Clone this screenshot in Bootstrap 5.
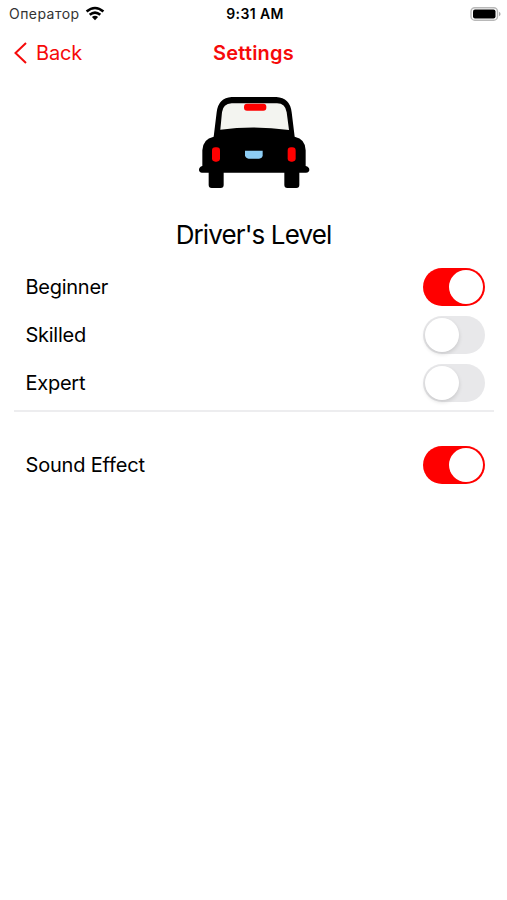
<!DOCTYPE html>
<html lang="en">
<head>
<meta charset="utf-8">
<meta name="viewport" content="width=device-width, initial-scale=1">
<title>Settings</title>
<link href="https://cdn.jsdelivr.net/npm/bootstrap@5.3.0/dist/css/bootstrap.min.css" rel="stylesheet">
<style>
body { font-family: Inter, "Liberation Sans", sans-serif; color: #000; background: #fff; }
svg { display: block; }
.status-bar { height: 28px; padding: 0 6px 0 9px; font-size: 14px; line-height: 28px; }
.status-side { flex: 1 1 0; }
.carrier { color: #333; letter-spacing: .45px; }
.wifi { margin-left: 5px; margin-top: -2px; }
.clock { font-weight: 600; font-size: 14px; letter-spacing: .4px; }
.title-bar { height: 50px; padding: 0 13px; color: #f60a0a; font-size: 20px; line-height: 50px; }
.back-link { color: inherit; letter-spacing: -.2px; line-height: 24px; }
.screen-title { font-size: 20px; font-weight: 600; letter-spacing: .2px; }
.taxi { margin-top: 7px; }
.level-title { font-size: 26px; line-height: 32px; letter-spacing: -.88px; margin: 24px 0 12.4px; font-weight: 400; }
.option-list { margin: 0 13px 0 14px; border-bottom: 2px solid #ededef; padding-bottom: 3.5px; }
.option-row { height: 47.7px; padding: 0 9px 0 11.5px; font-size: 20px; }
.option-list .option-row label { letter-spacing: -.26px; }
.sound-list { margin: 29.2px 13px 0 14px; }
.sound-list .option-row label { letter-spacing: -.18px; }
.form-switch .form-check-input.toggle {
  width: 62.5px; height: 38px; margin: 0; border: 0; border-radius: 19px;
  background-color: #e8e8ea; background-image: none; position: relative; box-shadow: none;
}
.form-switch .form-check-input.toggle::before {
  content: ""; position: absolute; left: 2px; top: 2px; width: 34px; height: 34px;
  border-radius: 50%; background: #fff; box-shadow: 0 2px 4px rgba(0,0,0,.14);
}
.form-switch .form-check-input.toggle:checked { background-color: #f00; background-image: none; }
.form-switch .form-check-input.toggle:checked::before { left: 26.5px; box-shadow: none; }
</style>
</head>
<body>
<header>
  <div class="status-bar d-flex align-items-center">
    <div class="status-side d-flex align-items-center">
      <span class="carrier">Оператор</span>
      <svg class="wifi" width="20" height="15" viewBox="0 0 20 15" fill="none" stroke="#000" stroke-width="2.6">
        <path d="M1.6 5.6Q10-1.6 18.4 5.6M4.7 8.8Q10 4.3 15.3 8.8"/>
        <path d="M6.9 11.1Q10 8.6 13.1 11.1L10 14.2Z" fill="#000" stroke="none"/>
      </svg>
    </div>
    <span class="clock">9:31 AM</span>
    <div class="status-side d-flex justify-content-end">
      <svg width="31" height="15" viewBox="0 0 31 15">
        <rect x="1" y=".7" width="26.5" height="12.5" rx="3.8" fill="#fff" stroke="#b8b8b8" stroke-width="1.4"/>
        <rect x="3" y="2.5" width="22.5" height="9" rx="2" fill="#000"/>
        <path d="M29 4.7v4.6q1.6-.8 1.6-2.3T29 4.7" fill="#aaa"/>
      </svg>
    </div>
  </div>
  <nav class="title-bar d-flex align-items-center">
    <div class="status-side d-flex">
      <a class="back-link d-flex align-items-center text-decoration-none" href="#">
        <svg class="me-2" width="15" height="24" viewBox="0 0 15 24" fill="none" stroke="currentColor" stroke-width="2"><path d="M13 2L2.5 12L13 22"/></svg>
        <span>Back</span>
      </a>
    </div>
    <span class="screen-title">Settings</span>
    <div class="status-side"></div>
  </nav>
</header>
<main>
  <svg class="taxi mx-auto" width="130" height="110" viewBox="-3 0 390 330">
    <path d="M111 55H272Q287 60 290 80L297 137Q190 120 91 137L96 82Q98 60 111 55Z" fill="#f3f4f0"/>
    <path d="M71 155L80 82Q85 38 125 36H259Q300 38 305 82L314 155Q347 162 347 196V243Q358 246 358 254T348 263H328V300Q328 309 319 309H292Q283 309 283 300V263H101V300Q101 309 92 309H65Q56 309 56 300V263H36Q27 262 27 254T37 243V196Q38 162 71 155ZM91 134Q192 120 297 135L290 82Q286 55 261 55H125Q99 56 96 82Z" fill="#000" fill-rule="evenodd"/>
    <rect x="162" y="56" width="67" height="21" rx="9" fill="#f00"/>
    <rect x="66" y="187" width="24" height="43" rx="10" fill="#f00"/>
    <rect x="293" y="187" width="24" height="43" rx="10" fill="#f00"/>
    <path d="M165 197H218V211Q217 221 207 221H176Q166 220 165 211Z" fill="#8dcdf5"/>
  </svg>
  <h1 class="level-title text-center">Driver's Level</h1>
  <section class="option-list">
    <div class="option-row d-flex align-items-center justify-content-between">
      <label for="beginner">Beginner</label>
      <div class="form-switch p-0 d-flex"><input class="form-check-input toggle" type="checkbox" role="switch" id="beginner" checked></div>
    </div>
    <div class="option-row d-flex align-items-center justify-content-between">
      <label for="skilled">Skilled</label>
      <div class="form-switch p-0 d-flex"><input class="form-check-input toggle" type="checkbox" role="switch" id="skilled"></div>
    </div>
    <div class="option-row d-flex align-items-center justify-content-between">
      <label for="expert">Expert</label>
      <div class="form-switch p-0 d-flex"><input class="form-check-input toggle" type="checkbox" role="switch" id="expert"></div>
    </div>
  </section>
  <section class="sound-list">
    <div class="option-row d-flex align-items-center justify-content-between">
      <label for="sound">Sound Effect</label>
      <div class="form-switch p-0 d-flex"><input class="form-check-input toggle" type="checkbox" role="switch" id="sound" checked></div>
    </div>
  </section>
</main>
<script src="https://cdn.jsdelivr.net/npm/bootstrap@5.3.0/dist/js/bootstrap.bundle.min.js"></script>
</body>
</html>
